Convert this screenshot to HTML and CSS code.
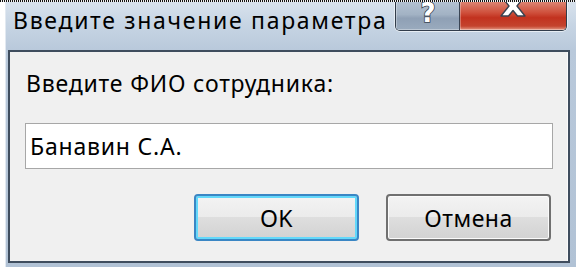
FILE: index.html
```html
<!DOCTYPE html>
<html lang="ru">
<head>
<meta charset="utf-8">
<title>Введите значение параметра</title>
<link rel="stylesheet" href="styles.css">
</head>
<body>
<div class="dots"></div>
<div class="window">
  <div class="titlebar">
    <div class="title">Введите значение параметра</div>
    <div class="caption-buttons">
      <div class="cap-btn help">
        <svg class="help-glyph" width="24" height="28" viewBox="0 0 24 28">
          <text x="12" y="20" text-anchor="middle" font-family="DejaVu Sans" font-weight="bold" font-size="26" fill="#ffffff" stroke="#3a4452" stroke-width="1.6" paint-order="stroke">?</text>
        </svg>
      </div>
      <div class="cap-btn close">
        <svg class="close-glyph" width="26" height="22" viewBox="0 0 26 22">
          <polygon points="1,1 8.5,1 13,6.5 17.5,1 25,1 17,11 25,21 17.5,21 13,15.5 8.5,21 1,21 9,11" fill="#ffffff" stroke="#3a4250" stroke-width="1.4" stroke-linejoin="round"/>
        </svg>
      </div>
    </div>
  </div>
  <div class="client">
    <div class="prompt">Введите ФИО сотрудника:</div>
    <input class="field" type="text" value="Банавин С.А.">
    <div class="actions">
      <button class="btn btn-default">OK</button>
      <button class="btn">Отмена</button>
    </div>
  </div>
</div>
</body>
</html>
```
FILE: styles.css
```css
html, body {
  margin: 0;
  padding: 0;
  background: #ffffff;
}
body {
  width: 576px;
  height: 272px;
  overflow: hidden;
  font-family: "Noto Sans", "Open Sans", sans-serif;
  color: #000;
}
.dots {
  height: 2px;
  background: repeating-linear-gradient(90deg, #111 0 1px, #f2f2f2 1px 2px);
}
.window {
  margin-left: 5px;
  height: 265px;
  display: flex;
  flex-direction: column;
  background: linear-gradient(180deg, #d8e2ed 0, #c7d5e4 22px, #b9c9db 48px, #b1c2d5 100%);
  box-shadow: inset 1px 0 0 #e2e9f1;
}
.titlebar {
  height: 48px;
  display: flex;
  align-items: flex-start;
  flex: none;
}
.title {
  margin: 6px 0 0 8px;
  font-size: 23px;
  line-height: 24px;
  letter-spacing: 1.7px;
  white-space: nowrap;
}
.caption-buttons {
  margin-left: auto;
  margin-right: 9px;
  display: flex;
  height: 28px;
  border: 1px solid #323d4b;
  border-top: none;
  border-radius: 0 0 5px 5px;
  overflow: hidden;
  box-shadow: 0 1px 0 0 rgba(255, 255, 255, 0.6), -1px 0 0 0 rgba(255, 255, 255, 0.5), 1px 0 0 0 rgba(255, 255, 255, 0.5);
}
.cap-btn {
  height: 28px;
  display: flex;
  justify-content: center;
  align-items: flex-start;
  overflow: hidden;
  box-shadow: inset 0 -1px 0 rgba(255, 255, 255, 0.35), inset 1px 0 0 rgba(255, 255, 255, 0.3);
}
.help {
  width: 63px;
  border-right: 1px solid #3a4554;
  background: linear-gradient(180deg, #b3c1d1 0, #a2b2c4 45%, #8fa0b5 58%, #9aabbe 100%);
}
.close {
  width: 106px;
  background: linear-gradient(180deg, #dc8472 0, #cf503c 38%, #c2321f 56%, #c4432e 86%, #e49884 100%);
}
.help-glyph {
  flex: none;
}
.close-glyph {
  margin-top: -7px;
  flex: none;
}
.client {
  flex: 1;
  margin: 0 6px 4px 3px;
  background: #f0f0f0;
  border: 2px solid #3f4d5e;
  box-shadow: inset -1px 0 0 #fbfbfb;
  box-sizing: border-box;
  padding: 19px 15px 20px;
  display: flex;
  flex-direction: column;
}
.prompt {
  margin-left: 1px;
  font-size: 23px;
  line-height: 24px;
  letter-spacing: 0.8px;
  white-space: nowrap;
}
.field {
  margin: 28px 0 0 0;
  height: 46px;
  box-sizing: border-box;
  border: 1px solid #a7a7a7;
  padding: 0 4px;
  background: #fff;
  font-family: inherit;
  font-size: 23px;
  letter-spacing: 0.8px;
  color: #000;
  outline: none;
}
.actions {
  margin-top: 25px;
  display: flex;
  justify-content: flex-end;
  gap: 27px;
  padding-right: 2px;
}
.btn {
  width: 165px;
  height: 47px;
  box-sizing: border-box;
  border: 2px solid #707070;
  border-radius: 4px;
  background: linear-gradient(180deg, #f3f3f3 0, #ebebeb 50%, #dedede 50%, #d2d2d2 100%);
  box-shadow: inset 0 0 0 1px #fbfbfb;
  font-family: inherit;
  font-size: 23px;
  letter-spacing: 0.5px;
  color: #000;
  padding: 0;
}
.btn-default {
  border-color: #3a86c4;
  box-shadow: inset 0 0 0 2px #63d8fa;
}
```
